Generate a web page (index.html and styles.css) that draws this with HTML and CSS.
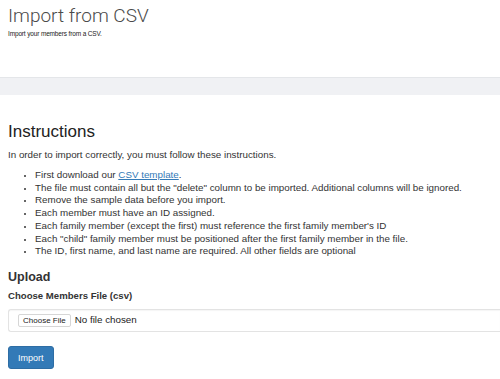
FILE: index.html
```html
<!DOCTYPE html>
<html lang="en">
<head>
    <meta charset="UTF-8">
    <meta name="viewport" content="width=device-width, initial-scale=1.0">
    <title>Import from CSV</title>
    <link rel="stylesheet" href="styles.css">
</head>
<body>
    <header class="page-header">
        <h1>Import from CSV</h1>
        <p>Import your members from a CSV.</p>
    </header>

    <div class="band"></div>

    <main class="content">
        <h2>Instructions</h2>
        <p>In order to import correctly, you must follow these instructions.</p>
        <ul class="steps">
            <li>First download our <a href="#">CSV template</a>.</li>
            <li>The file must contain all but the "delete" column to be imported. Additional columns will be ignored.</li>
            <li>Remove the sample data before you import.</li>
            <li>Each member must have an ID assigned.</li>
            <li>Each family member (except the first) must reference the first family member's ID</li>
            <li>Each "child" family member must be positioned after the first family member in the file.</li>
            <li>The ID, first name, and last name are required. All other fields are optional</li>
        </ul>

        <h3>Upload</h3>
        <form class="upload-form" onsubmit="return false">
            <label class="field-label" for="membersFile">Choose Members File (csv)</label>
            <div class="file-box">
                <label class="file-button" for="membersFile">Choose File</label>
                <span class="file-name">No file chosen</span>
                <input type="file" id="membersFile" class="file-input" accept=".csv">
            </div>
            <button type="submit" class="btn-primary">Import</button>
        </form>
    </main>
</body>
</html>
```

FILE: styles.css
```css
html, body {
    overflow-x: hidden;
}
body {
    font-family: "Liberation Sans", Arial, sans-serif;
    font-size: 9.8px;
    line-height: 12.75px;
    margin: 0;
    padding: 0;
    background-color: #fff;
    color: #333;
}
.page-header {
    padding: 0 8px;
}
.page-header h1 {
    font-family: Roboto, "Liberation Sans", Arial, sans-serif;
    font-weight: 300;
    font-size: 19px;
    line-height: 22px;
    margin: 5px 0 0;
    color: #4a4a4a;
}
.page-header p {
    font-size: 6.5px;
    letter-spacing: -0.15px;
    line-height: 8px;
    margin: 3px 0 0;
    color: #222;
}
.band {
    margin-top: 39px;
    height: 17px;
    background-color: #f0f1f4;
    border-top: 1px solid #e4e6e9;
}
.content {
    padding: 0 8px;
}
.content h2 {
    font-size: 17px;
    font-weight: 500;
    line-height: 20px;
    margin: 27px 0 0;
    color: #222;
}
.content p {
    margin: 7px 0 0;
}
.steps {
    margin: 7px 0 0;
    padding-left: 27px;
}
.steps li::marker {
    font-size: 7px;
}
.steps a {
    color: #337ab7;
    text-decoration: underline;
}
.content h3 {
    font-size: 12.5px;
    font-weight: bold;
    line-height: 15px;
    margin: 12.4px 0 0;
}
.upload-form {
    display: flex;
    flex-direction: column;
    align-items: flex-start;
}
.field-label {
    display: block;
    font-size: 9.6px;
    font-weight: bold;
    margin-top: 5px;
}
.file-box {
    display: flex;
    align-items: center;
    gap: 4px;
    box-sizing: border-box;
    width: calc(100% + 8px);
    height: 23px;
    margin-top: 6px;
    padding: 0 9px;
    border: 1px solid #e3e3e3;
    border-right: none;
    border-radius: 3px 0 0 3px;
    box-shadow: inset 0 1px 1px rgba(0,0,0,0.04);
}
.file-button {
    font-size: 8px;
    line-height: 10px;
    padding: 1px 4px 0;
    background-color: #fff;
    border: 1px solid #d6d6d6;
    border-radius: 2px;
    color: #222;
}
.file-name {
    font-size: 9.8px;
    color: #222;
}
.file-input {
    display: none;
}
.btn-primary {
    margin-top: 14px;
    height: 23px;
    padding: 0 9px;
    font-family: "Liberation Sans", Arial, sans-serif;
    font-size: 9px;
    color: #fff;
    background-color: #337ab7;
    border: 1px solid #2e6da4;
    border-radius: 3px;
    cursor: pointer;
}
```
